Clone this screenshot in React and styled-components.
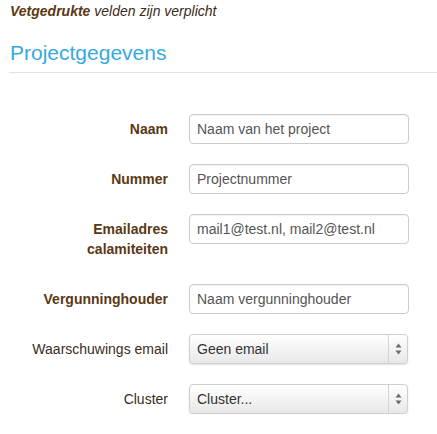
import * as React from 'react';
import styled, { createGlobalStyle } from "styled-components";

const GlobalStyle = createGlobalStyle`
    body {
        margin: 0;
        background: #fff;
        font-family: "Liberation Sans", Arial, sans-serif;
        font-size: 14px;
        color: #333;
    }
`;

const fields = [
    { label: "Naam", bold: true, type: "input", value: "Naam van het project" },
    { label: "Nummer", bold: true, type: "input", value: "Projectnummer" },
    { label: "Emailadres calamiteiten", bold: true, type: "input", value: "mail1@test.nl, mail2@test.nl" },
    { label: "Vergunninghouder", bold: true, type: "input", value: "Naam vergunninghouder" },
    { label: "Waarschuwings email", bold: false, type: "select", value: "Geen email" },
    { label: "Cluster", bold: false, type: "select", value: "Cluster..." },
];

const Arrows = () => (
    <svg width="7" height="12" viewBox="0 0 7 12">
        <path d="M3.5 0.5 L6.5 4.5 L0.5 4.5 Z" fill="#6b6b6b" />
        <path d="M0.5 7.5 L6.5 7.5 L3.5 11.5 Z" fill="#6b6b6b" />
    </svg>
);

const App = () => {
    return (
        <>
            <GlobalStyle />
            <Page>
                <Note><b>Vetgedrukte</b> velden zijn verplicht</Note>
                <Heading>Projectgegevens</Heading>
                <Rule />
                <Form>
                    {fields.map((f) => (
                        <Row key={f.label}>
                            <Label bold={f.bold ? 1 : 0}>{f.label}</Label>
                            {f.type === "input" ?
                                <Input defaultValue={f.value} />
                                :
                                <SelectWrap>
                                    <Select defaultValue={f.value}>
                                        <option>{f.value}</option>
                                    </Select>
                                    <ArrowCell><Arrows /></ArrowCell>
                                </SelectWrap>
                            }
                        </Row>
                    ))}
                </Form>
            </Page>
        </>
    );
};

export default App;

const Page = styled.div`
    padding: 1px 0 0 10px;
`;
const Note = styled.div`
    font-style: italic;
    line-height: 20px;
    color: #3a2a1a;
    b {
        color: #5a3813;
    }
`;
const Heading = styled.h2`
    margin: 17px 0 0;
    font-size: 21px;
    line-height: 30px;
    font-weight: normal;
    color: #36a9e1;
`;
const Rule = styled.div`
    margin: 4px 0 0 -1px;
    border-top: 1px solid #e3e3e3;
`;
const Form = styled.div`
    margin-top: 41px;
    display: flex;
    flex-direction: column;
    gap: 20px;
`;
const Row = styled.div`
    display: flex;
    align-items: flex-start;
    gap: 21px;
`;
const Label = styled.label`
    width: 158px;
    flex-shrink: 0;
    text-align: right;
    padding: 5px 0;
    line-height: 20px;
    font-weight: ${p => p.bold ? "bold" : "normal"};
    color: ${p => p.bold ? "#5a3813" : "#3b2c1e"};
`;
const Input = styled.input`
    box-sizing: border-box;
    width: 220px;
    height: 30px;
    padding: 4px 7px;
    border: 1px solid #cccccc;
    border-radius: 4px;
    font-family: inherit;
    font-size: 14px;
    color: #555;
    box-shadow: inset 0 1px 1px rgba(0,0,0,0.05);
    outline: none;
`;
const SelectWrap = styled.div`
    box-sizing: border-box;
    width: 219px;
    height: 30px;
    display: flex;
    border: 1px solid #cfcfcf;
    border-radius: 4px;
    background: linear-gradient(#ffffff, #e8e8e8);
    box-shadow: 0 1px 2px rgba(0,0,0,0.12);
`;
const Select = styled.select`
    flex: 1;
    appearance: none;
    border: none;
    background: transparent;
    padding: 0 7px;
    font-family: inherit;
    font-size: 14px;
    color: #333;
    outline: none;
`;
const ArrowCell = styled.div`
    width: 18px;
    display: flex;
    align-items: center;
    justify-content: center;
    border-left: 1px solid #d4d4d4;
    pointer-events: none;
`;
